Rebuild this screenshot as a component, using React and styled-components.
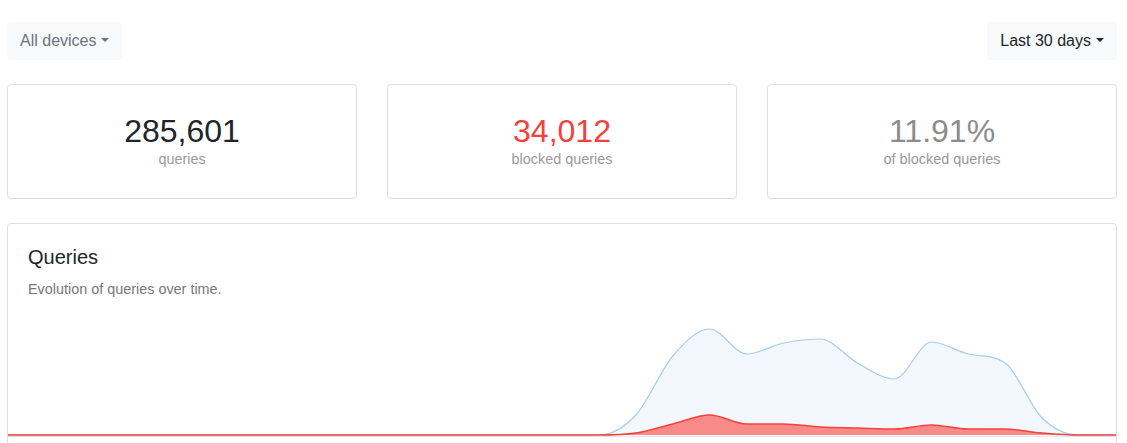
import React from "react";
import styled, { createGlobalStyle } from "styled-components";

const Global = createGlobalStyle`
  html, body { margin: 0; padding: 0; background: #fff; }
  body {
    font-family: "Liberation Sans", Arial, sans-serif;
    color: #212529;
    font-size: 16px;
    line-height: 1.5;
  }
`;

const Page = styled.div`
  padding: 22px 10px 0 7px;
`;

const Toolbar = styled.div`
  display: flex;
  justify-content: space-between;
  align-items: center;
`;

const DropButton = styled.button`
  display: inline-flex;
  align-items: center;
  font-family: inherit;
  font-size: 16px;
  line-height: 24px;
  padding: 6px 12px;
  border: 1px solid #f8f9fa;
  border-radius: 4px;
  background: #f8f9fa;
  color: ${(p) => (p.$muted ? "#6c757d" : "#212529")};
  cursor: pointer;
  &::after {
    content: "";
    display: inline-block;
    margin-left: 5px;
    border-top: 4.8px solid;
    border-right: 4px solid transparent;
    border-left: 4px solid transparent;
    border-bottom: 0;
    transform: translateY(-1px);
  }
`;

const StatsGrid = styled.div`
  display: grid;
  grid-template-columns: repeat(3, 1fr);
  gap: 30px;
  margin-top: 24px;
`;

const Card = styled.div`
  border: 1px solid #dfdfdf;
  border-radius: 4px;
  background: #fff;
`;

const StatCard = styled(Card)`
  height: 115px;
  box-sizing: border-box;
  display: flex;
  flex-direction: column;
  align-items: center;
  justify-content: center;
  padding-bottom: 3px;
`;

const StatValue = styled.div`
  font-size: 32px;
  line-height: 38px;
  color: ${(p) => p.$color};
`;

const StatLabel = styled.div`
  font-size: 14.4px;
  line-height: 18px;
  color: #999;
`;

const ChartCard = styled(Card)`
  margin-top: 24px;
  padding-top: 21px;
  padding-bottom: 40px;
`;

const ChartHeader = styled.div`
  padding: 0 20px;
`;

const ChartTitle = styled.h5`
  margin: 0 0 10px;
  font-size: 20px;
  font-weight: 400;
  line-height: 24px;
  color: #212529;
`;

const ChartSub = styled.div`
  font-size: 14.4px;
  line-height: 21px;
  color: #777;
`;

const ChartSvg = styled.svg`
  display: block;
  width: 100%;
  height: 137px;
  margin-top: 1px;
`;

function monotonePath(pts) {
  const n = pts.length;
  const dx = [], dy = [], m = [];
  for (let i = 0; i < n - 1; i++) {
    dx.push(pts[i + 1][0] - pts[i][0]);
    dy.push(pts[i + 1][1] - pts[i][1]);
    m.push(dy[i] / dx[i]);
  }
  const t = new Array(n);
  t[0] = m[0];
  t[n - 1] = m[n - 2];
  for (let i = 1; i < n - 1; i++) {
    if (m[i - 1] * m[i] <= 0) t[i] = 0;
    else t[i] = (m[i - 1] + m[i]) / 2;
  }
  for (let i = 0; i < n - 1; i++) {
    if (m[i] === 0) {
      t[i] = 0;
      t[i + 1] = 0;
      continue;
    }
    const a = t[i] / m[i];
    const b = t[i + 1] / m[i];
    const s = a * a + b * b;
    if (s > 9) {
      const k = 3 / Math.sqrt(s);
      t[i] = k * a * m[i];
      t[i + 1] = k * b * m[i];
    }
  }
  let d = `M${pts[0][0]},${pts[0][1]}`;
  for (let i = 0; i < n - 1; i++) {
    const h = dx[i] / 3;
    d += ` C${pts[i][0] + h},${pts[i][1] + t[i] * h} ${pts[i + 1][0] - h},${
      pts[i + 1][1] - t[i + 1] * h
    } ${pts[i + 1][0]},${pts[i + 1][1]}`;
  }
  return d;
}

const zeros = new Array(16).fill(0);
const total = [...zeros, 0, 20, 79, 106, 81, 92, 96, 72, 56, 93, 81, 72, 17, 0, 0];
const blocked = [...zeros, 0, 2, 11, 20, 11, 11, 8, 7, 6, 10, 6, 6, 2, 0, 0];

const W = 1108;
const BASE = 134;

function toPts(arr) {
  const step = W / (arr.length - 1);
  return arr.map((v, i) => [i * step, BASE - v]);
}

function Chart() {
  const tp = toPts(total);
  const bp = toPts(blocked);
  const tLine = monotonePath(tp);
  const bLine = monotonePath(bp);
  const close = ` L${W},${BASE} L0,${BASE} Z`;
  return (
    <ChartSvg viewBox={`0 0 ${W} 137`} preserveAspectRatio="none">
      <line x1="0" x2={W} y1={BASE + 1.5} y2={BASE + 1.5} stroke="#e4e4e4" strokeWidth="1" />
      <path d={tLine + close} fill="rgba(54,140,235,0.06)" />
      <path d={tLine} fill="none" stroke="rgba(80,160,235,0.5)" strokeWidth="1.2" />
      <path d={bLine + close} fill="rgba(250,80,70,0.65)" />
      <path d={bLine} fill="none" stroke="#f5413b" strokeWidth="1.5" />
    </ChartSvg>
  );
}

const stats = [
  { value: "285,601", label: "queries", color: "#212529" },
  { value: "34,012", label: "blocked queries", color: "#f5413b" },
  { value: "11.91%", label: "of blocked queries", color: "#8c8c8c" },
];

export default function App() {
  return (
    <>
      <Global />
      <Page>
        <Toolbar>
          <DropButton $muted>All devices</DropButton>
          <DropButton>Last 30 days</DropButton>
        </Toolbar>
        <StatsGrid>
          {stats.map((s) => (
            <StatCard key={s.label}>
              <StatValue $color={s.color}>{s.value}</StatValue>
              <StatLabel>{s.label}</StatLabel>
            </StatCard>
          ))}
        </StatsGrid>
        <ChartCard>
          <ChartHeader>
            <ChartTitle>Queries</ChartTitle>
            <ChartSub>Evolution of queries over time.</ChartSub>
          </ChartHeader>
          <Chart />
        </ChartCard>
      </Page>
    </>
  );
}
